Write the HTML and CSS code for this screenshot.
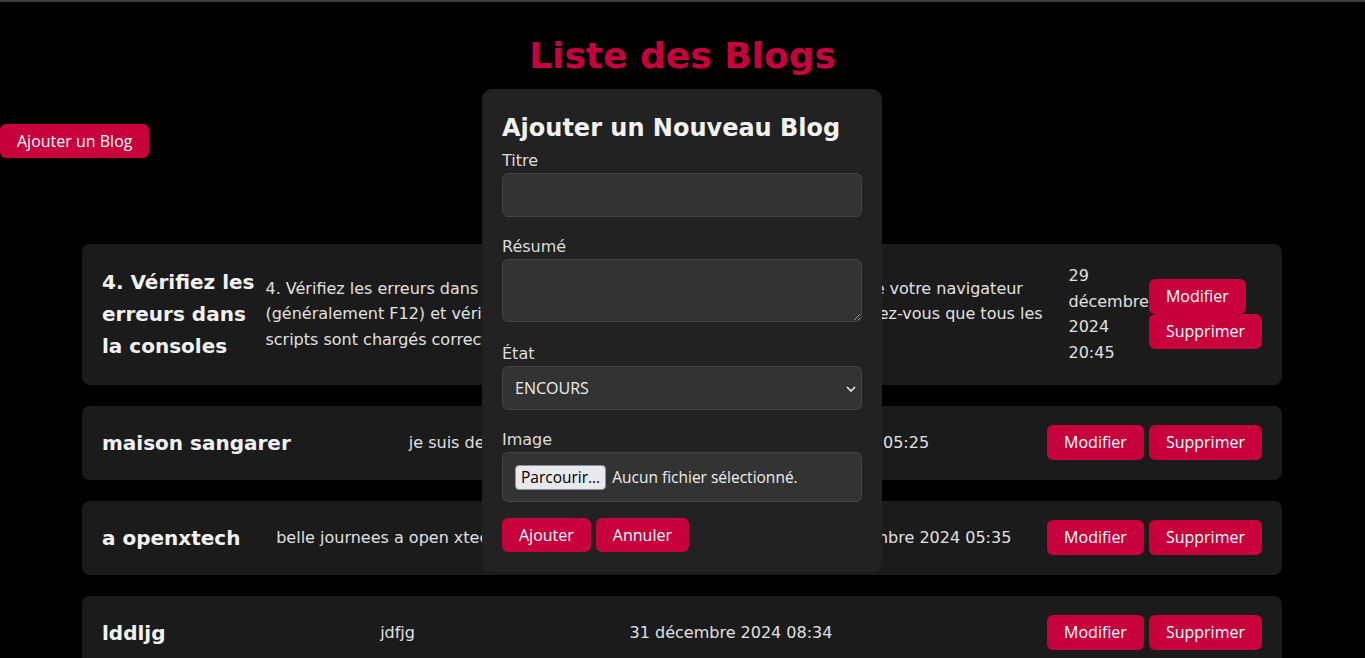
FILE: index.html
```html
<!DOCTYPE html>
<html lang="fr">
<head>
<meta charset="utf-8">
<title>Liste des Blogs</title>
<link rel="stylesheet" href="styles.css">
</head>
<body>
<div class="topbar"></div>
<h1 class="page-title">Liste des Blogs</h1>
<div class="toolbar">
  <button class="btn">Ajouter un Blog</button>
</div>

<main class="blog-list">
  <article class="blog-item">
    <h3 class="blog-title">4. Vérifiez les erreurs dans la consoles</h3>
    <p class="blog-summary">4. Vérifiez les erreurs dans la Console : Ouvrez, l'Outils de développement de votre navigateur (généralement F12) et vérifiez s'il y a des erreurs JavaScript affichées. Assurez-vous que tous les scripts sont chargés correctement. Rechargez ensuite la page pour tester.</p>
    <p class="blog-date">29 décembre 2024 20:45</p>
    <div class="blog-actions">
      <button class="btn btn-card">Modifier</button>
      <button class="btn btn-card">Supprimer</button>
    </div>
  </article>

  <article class="blog-item">
    <h3 class="blog-title">maison sangarer</h3>
    <p class="blog-summary">je suis developpeur web.</p>
    <p class="blog-date">30 décembre 2024 05:25</p>
    <div class="blog-actions">
      <button class="btn btn-card">Modifier</button>
      <button class="btn btn-card">Supprimer</button>
    </div>
  </article>

  <article class="blog-item">
    <h3 class="blog-title">a openxtech</h3>
    <p class="blog-summary">belle journees a open xtech avec toute l'equipe du projet web</p>
    <p class="blog-date">30 décembre 2024 05:35</p>
    <div class="blog-actions">
      <button class="btn btn-card">Modifier</button>
      <button class="btn btn-card">Supprimer</button>
    </div>
  </article>

  <article class="blog-item">
    <h3 class="blog-title">lddljg</h3>
    <p class="blog-summary">jdfjg</p>
    <p class="blog-date">31 décembre 2024 08:34</p>
    <div class="blog-actions">
      <button class="btn btn-card">Modifier</button>
      <button class="btn btn-card">Supprimer</button>
    </div>
  </article>
</main>

<div class="modal">
  <h2 class="modal-title">Ajouter un Nouveau Blog</h2>
  <form class="modal-form">
    <label class="field-label" for="titre">Titre</label>
    <input class="field-input" id="titre" type="text">

    <label class="field-label" for="resume">Résumé</label>
    <textarea class="field-input field-textarea" id="resume"></textarea>

    <label class="field-label" for="etat">État</label>
    <div class="select-wrap">
      <select class="field-input field-select" id="etat">
        <option>ENCOURS</option>
        <option>TERMINE</option>
      </select>
      <svg class="select-chevron" width="10" height="6" viewBox="0 0 10 6"><polyline points="1,1 5,5 9,1" fill="none" stroke="#e8e8e8" stroke-width="1.6"/></svg>
    </div>

    <label class="field-label">Image</label>
    <div class="file-field">
      <span class="file-button">Parcourir…</span>
      <span class="file-name">Aucun fichier sélectionné.</span>
    </div>

    <div class="modal-actions">
      <button type="button" class="btn">Ajouter</button>
      <button type="button" class="btn">Annuler</button>
    </div>
  </form>
</div>
</body>
</html>
```
FILE: styles.css
```css
* {
  box-sizing: border-box;
}

html, body {
  background: #000;
}

body {
  margin: 0;
  font-family: "DejaVu Sans", sans-serif;
  font-size: 16px;
  line-height: 1.6;
  color: #e6e6e6;
}

.topbar {
  height: 2px;
  background: #3d3d3d;
}

.page-title {
  margin: 24.5px 0 0;
  font-size: 36px;
  line-height: 1.6;
  font-weight: bold;
  color: #c8003c;
  text-align: center;
}

.toolbar {
  display: flex;
  margin-top: 39.5px;
  margin-bottom: 86px;
}

.btn {
  display: inline-block;
  border: 0;
  border-radius: 6px;
  background: #c8003c;
  color: #fff;
  font-family: "Open Sans", sans-serif;
  font-size: 16px;
  line-height: 18px;
  padding: 8px 17px;
  cursor: pointer;
  white-space: nowrap;
}

.btn-card {
  padding: 8px 17px 9px;
}

.blog-list {
  max-width: 1200px;
  margin: 0 auto;
  margin-left: calc(50% - 600.5px);
}

.blog-item {
  display: flex;
  justify-content: space-between;
  align-items: center;
  background: #1b1b1b;
  border-radius: 8px;
  padding: 19.5px 20px;
  margin-bottom: 21px;
}

.blog-title {
  margin: 0;
  font-size: 20px;
  line-height: 1.6;
  font-weight: bold;
  color: #f2f2f2;
}

.blog-summary,
.blog-date {
  margin: 0;
  color: #e0e0e0;
}

.blog-actions {
  display: flex;
  flex-wrap: wrap;
  column-gap: 5px;
}

.modal {
  position: fixed;
  top: 89px;
  left: 50%;
  margin-left: -200.5px;
  width: 400px;
  padding: 20px;
  background: #222;
  border-radius: 10px;
}

.modal-title {
  margin: 0;
  font-size: 24px;
  line-height: 38px;
  font-weight: bold;
  color: #f2f2f2;
}

.modal-form {
  display: flex;
  flex-direction: column;
}

.field-label {
  display: block;
  line-height: 26px;
  padding-top: 1px;
  margin-bottom: -1px;
  color: #dcdcdc;
}

.field-input {
  display: block;
  width: 100%;
  height: 44px;
  margin: 0 0 16px;
  padding: 12px;
  background: #333;
  border: 1px solid #444;
  border-radius: 6px;
  color: #eee;
  font-family: "Open Sans", sans-serif;
  font-size: 16px;
  line-height: 18px;
}

.field-textarea {
  height: 63px;
  margin-bottom: 18px;
}

.select-wrap {
  position: relative;
}

.field-select {
  appearance: none;
  -webkit-appearance: none;
  padding: 0 12px;
}

.select-chevron {
  position: absolute;
  right: 6px;
  top: 20px;
}

.file-field {
  display: flex;
  align-items: center;
  gap: 6px;
  height: 50px;
  margin-bottom: 16px;
  padding: 0 12px;
  background: #333;
  border: 1px solid #444;
  border-radius: 6px;
  font-family: "Open Sans", sans-serif;
  font-size: 15.5px;
}

.file-button {
  display: inline-block;
  height: 25px;
  padding: 0 5px;
  line-height: 23px;
  background: #e9e9ed;
  border: 1px solid #8f8f9d;
  border-radius: 4px;
  color: #000;
}

.file-name {
  color: #eee;
}

.modal-actions {
  display: flex;
  gap: 5px;
}
```
